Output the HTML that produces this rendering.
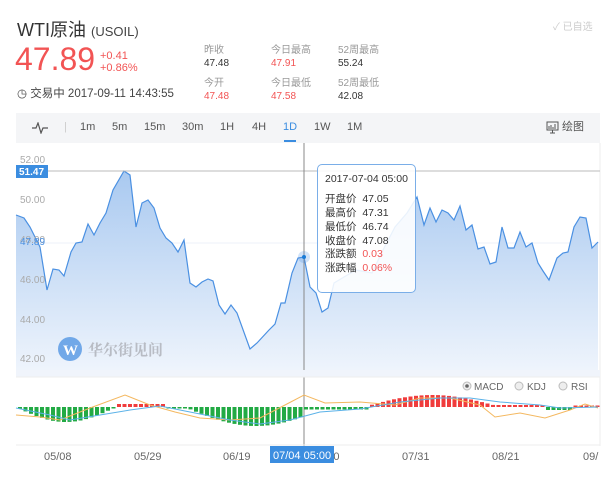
<!DOCTYPE html>
<html><head><meta charset="utf-8">
<style>
*{margin:0;padding:0;box-sizing:border-box}
body{width:616px;height:483px;background:#fff;font-family:"Liberation Sans","Noto Sans CJK SC",sans-serif;position:relative;overflow:hidden;color:#333}
.a{position:absolute;white-space:nowrap;line-height:1}
.lb{font-size:10px;color:#999}
.vl{font-size:10px;color:#333}
.r{color:#f25454}
.tb{position:absolute;left:16px;top:113px;width:584px;height:30px;background:#f4f5f7}
.tb span{position:absolute;top:9px;font-size:11px;color:#555;line-height:1}
</style></head><body>
<div class="a" style="left:17px;top:21px;font-size:18px;color:#333">WTI原油 <span style="font-size:13px;color:#444">(USOIL)</span></div>
<div class="a" style="left:553px;top:23px;font-size:10px;color:#ccc">✓ 已自选</div>
<div class="a r" style="left:15px;top:43px;font-size:32px">47.89</div>
<div class="a r" style="left:100px;top:51px;font-size:11px">+0.41</div>
<div class="a r" style="left:100px;top:63px;font-size:11px">+0.86%</div>
<div class="a" style="left:17px;top:89px;font-size:11.5px;color:#444">◷ 交易中 2017-09-11 14:43:55</div>
<div class="a lb" style="left:204px;top:46px">昨收</div><div class="a vl" style="left:204px;top:59px">47.48</div>
<div class="a lb" style="left:271px;top:46px">今日最高</div><div class="a vl r" style="left:271px;top:59px">47.91</div>
<div class="a lb" style="left:338px;top:46px">52周最高</div><div class="a vl" style="left:338px;top:59px">55.24</div>
<div class="a lb" style="left:204px;top:79px">今开</div><div class="a vl r" style="left:204px;top:92px">47.48</div>
<div class="a lb" style="left:271px;top:79px">今日最低</div><div class="a vl r" style="left:271px;top:92px">47.58</div>
<div class="a lb" style="left:338px;top:79px">52周最低</div><div class="a vl" style="left:338px;top:92px">42.08</div>
<div class="tb">
<svg style="position:absolute;left:16px;top:9px" width="16" height="12"><path d="M0 6H4L6 1L9 11L11 6H16" fill="none" stroke="#555" stroke-width="1.2"/></svg>
<span style="left:48px;color:#ccc">|</span>
<span style="left:64px">1m</span><span style="left:96px">5m</span><span style="left:128px">15m</span><span style="left:166px">30m</span><span style="left:204px">1H</span><span style="left:236px">4H</span><span style="left:267px;color:#3b8de0">1D</span><span style="left:298px">1W</span><span style="left:331px">1M</span>
<div style="position:absolute;left:268px;top:27px;width:12px;height:2px;background:#3b8de0"></div>
<svg style="position:absolute;left:530px;top:8px" width="13" height="13"><rect x="1" y="1" width="11" height="8" fill="none" stroke="#555"/><path d="M3 8V5M5 8V4M7 8V6M9 8V3M4 12H9M6.5 9V12" stroke="#555"/></svg>
<span style="left:546px">绘图</span>
</div>
<svg class="a" style="left:0;top:0" width="616" height="483">
<defs><linearGradient id="gr" x1="0" y1="0" x2="0" y2="1"><stop offset="0" stop-color="#a9c9f0"/><stop offset="1" stop-color="#eef4fc"/></linearGradient></defs>
<line x1="600" y1="143" x2="600" y2="446" stroke="#eee"/>
<line x1="16" y1="243" x2="600" y2="243" stroke="#eef2f8"/>
<path id="area" fill="url(#gr)" stroke="none"/>
<path id="ln" fill="none" stroke="#4a90e2" stroke-width="1.2"/>
<g font-size="10" fill="#aaa" font-family="Liberation Sans">
<text x="20" y="163">52.00</text><text x="20" y="203">50.00</text><text x="20" y="243">48.00</text><text x="20" y="283">46.00</text><text x="20" y="323">44.00</text><text x="20" y="362">42.00</text>
</g>
<text x="20" y="245" font-size="10" fill="#4a90e2">47.89</text>
<line x1="16" y1="171" x2="600" y2="171" stroke="#bbb"/>
<rect x="16" y="165" width="32" height="13" fill="#3b8de0"/>
<text x="19" y="175" font-size="10" fill="#fff" font-weight="bold">51.47</text>
<line x1="304" y1="143" x2="304" y2="446" stroke="#888"/>
<circle cx="304" cy="257" r="6" fill="#4a90e2" opacity=".25"/><circle cx="304" cy="257" r="2" fill="#1a7bd6"/>
<circle cx="70" cy="349" r="12" fill="#4a90e2" opacity=".75"/>
<text x="63" y="355" font-size="15" fill="#fff" font-weight="bold" font-family="Liberation Serif">W</text>
<text x="88" y="355" font-size="15" fill="#b8bcc4" font-family="Noto Serif CJK SC,serif" font-weight="bold">华尔街见间</text>
<rect x="16" y="370" width="584" height="7" fill="#f0f4fb"/>
<line x1="16" y1="377" x2="600" y2="377" stroke="#eee"/>
<line x1="16" y1="445" x2="600" y2="445" stroke="#eee"/>
<g id="bars"></g>
<path id="or" fill="none" stroke="#f4b860" stroke-width="1"/>
<path id="bl" fill="none" stroke="#5bb2e8" stroke-width="1"/>
<g font-size="10" fill="#666">
<circle cx="467" cy="386" r="4" fill="#eee" stroke="#bbb"/><circle cx="467" cy="386" r="1.8" fill="#666"/><text x="474" y="390">MACD</text>
<circle cx="519" cy="386" r="4" fill="#eee" stroke="#bbb"/><text x="527" y="390">KDJ</text>
<circle cx="563" cy="386" r="4" fill="#eee" stroke="#bbb"/><text x="571" y="390">RSI</text>
</g>
<g font-size="11" fill="#666">
<text x="44" y="460">05/08</text><text x="134" y="460">05/29</text><text x="223" y="460">06/19</text><text x="312" y="460">07/10</text><text x="402" y="460">07/31</text><text x="492" y="460">08/21</text><text x="583" y="460">09/</text>
</g>
<rect x="270" y="446" width="64" height="17" fill="#3b8de0"/>
<text x="273" y="459" font-size="11" fill="#fff">07/04 05:00</text>
</svg>
<div class="a" style="left:317px;top:164px;width:99px;height:129px;border:1px solid #7aaee8;border-radius:5px;background:rgba(255,255,255,.88);font-size:10.5px;color:#333">
<div class="a" style="left:7px;top:9px">2017-07-04 05:00</div>
<div class="a" style="left:7px;top:29px">开盘价&nbsp; 47.05</div>
<div class="a" style="left:7px;top:43px">最高价&nbsp; 47.31</div>
<div class="a" style="left:7px;top:57px">最低价&nbsp; 46.74</div>
<div class="a" style="left:7px;top:71px">收盘价&nbsp; 47.08</div>
<div class="a" style="left:7px;top:84px">涨跌额&nbsp; <span class="r">0.03</span></div>
<div class="a" style="left:7px;top:98px">涨跌幅&nbsp; <span class="r">0.06%</span></div>
</div>
<script>
var p=[[16,215],[24,218],[30,227],[40,247],[47,290],[53,269],[59,270],[64,276],[71,252],[76,243],[82,242],[88,224],[94,235],[100,223],[106,213],[113,190],[124,171],[130,175],[136,227],[142,203],[148,200],[154,208],[160,228],[166,238],[172,243],[178,252],[184,240],[190,283],[196,287],[202,282],[208,279],[213,281],[219,305],[225,314],[231,305],[237,313],[250,349],[257,343],[269,330],[275,324],[281,303],[285,303],[292,273],[298,258],[304,257],[310,287],[316,293],[322,312],[328,308],[334,283],[344,277],[356,270],[372,273],[383,250],[395,227],[407,213],[417,197],[424,225],[430,208],[436,222],[442,210],[448,213],[454,220],[460,206],[466,230],[472,225],[478,249],[484,247],[490,264],[496,262],[502,227],[508,248],[514,248],[520,232],[526,247],[532,243],[538,263],[543,271],[549,280],[557,258],[563,253],[568,252],[574,227],[580,217],[586,218],[592,248],[598,242]];
var d="M"+p.map(function(a){return a.join(" ")}).join("L");
document.getElementById("ln").setAttribute("d",d);
document.getElementById("area").setAttribute("d",d+"L598 370L16 370Z");
function pl(a){return "M"+a.map(function(x){return x.join(" ")}).join("L")}
document.getElementById("or").setAttribute("d",pl([[16,415],[40,417],[60,420],[90,408],[125,395],[150,405],[175,412],[200,418],[230,420],[260,418],[285,405],[304,395],[325,403],[360,402],[395,405],[420,398],[450,398],[480,405],[495,417],[520,413],[545,418],[570,410],[585,404],[598,408]]));
document.getElementById("bl").setAttribute("d",pl([[16,408],[50,415],[70,420],[100,415],[130,410],[160,406],[190,412],[230,420],[260,424],[290,420],[320,412],[360,409],[400,402],[440,398],[470,398],[500,402],[540,405],[560,408],[598,407]]));
function h(x){
 if(x<115)return -Math.sin((x-14)/100*Math.PI)*15;
 if(x<162)return 3;
 if(x<185)return -1.5;
 if(x<302)return -Math.sin((x-185)/117*Math.PI*0.85)*18-1;
 if(x<365)return -2.5;
 if(x<495)return Math.sin((x-365)/130*Math.PI)*11+1;
 if(x<542)return 2;
 if(x<572)return -3;
 return 1.5;}
var s="";for(var x=18;x<598;x+=5.5){var v=h(x),z=407;var c=v>0?"#f03c3c":"#22aa44";var hh=Math.max(1.5,Math.abs(v));s+='<rect x="'+x.toFixed(1)+'" y="'+(v>0?z-hh:z).toFixed(1)+'" width="4" height="'+hh.toFixed(1)+'" fill="'+c+'"/>';}
document.getElementById("bars").innerHTML=s;
</script>
</body></html>
